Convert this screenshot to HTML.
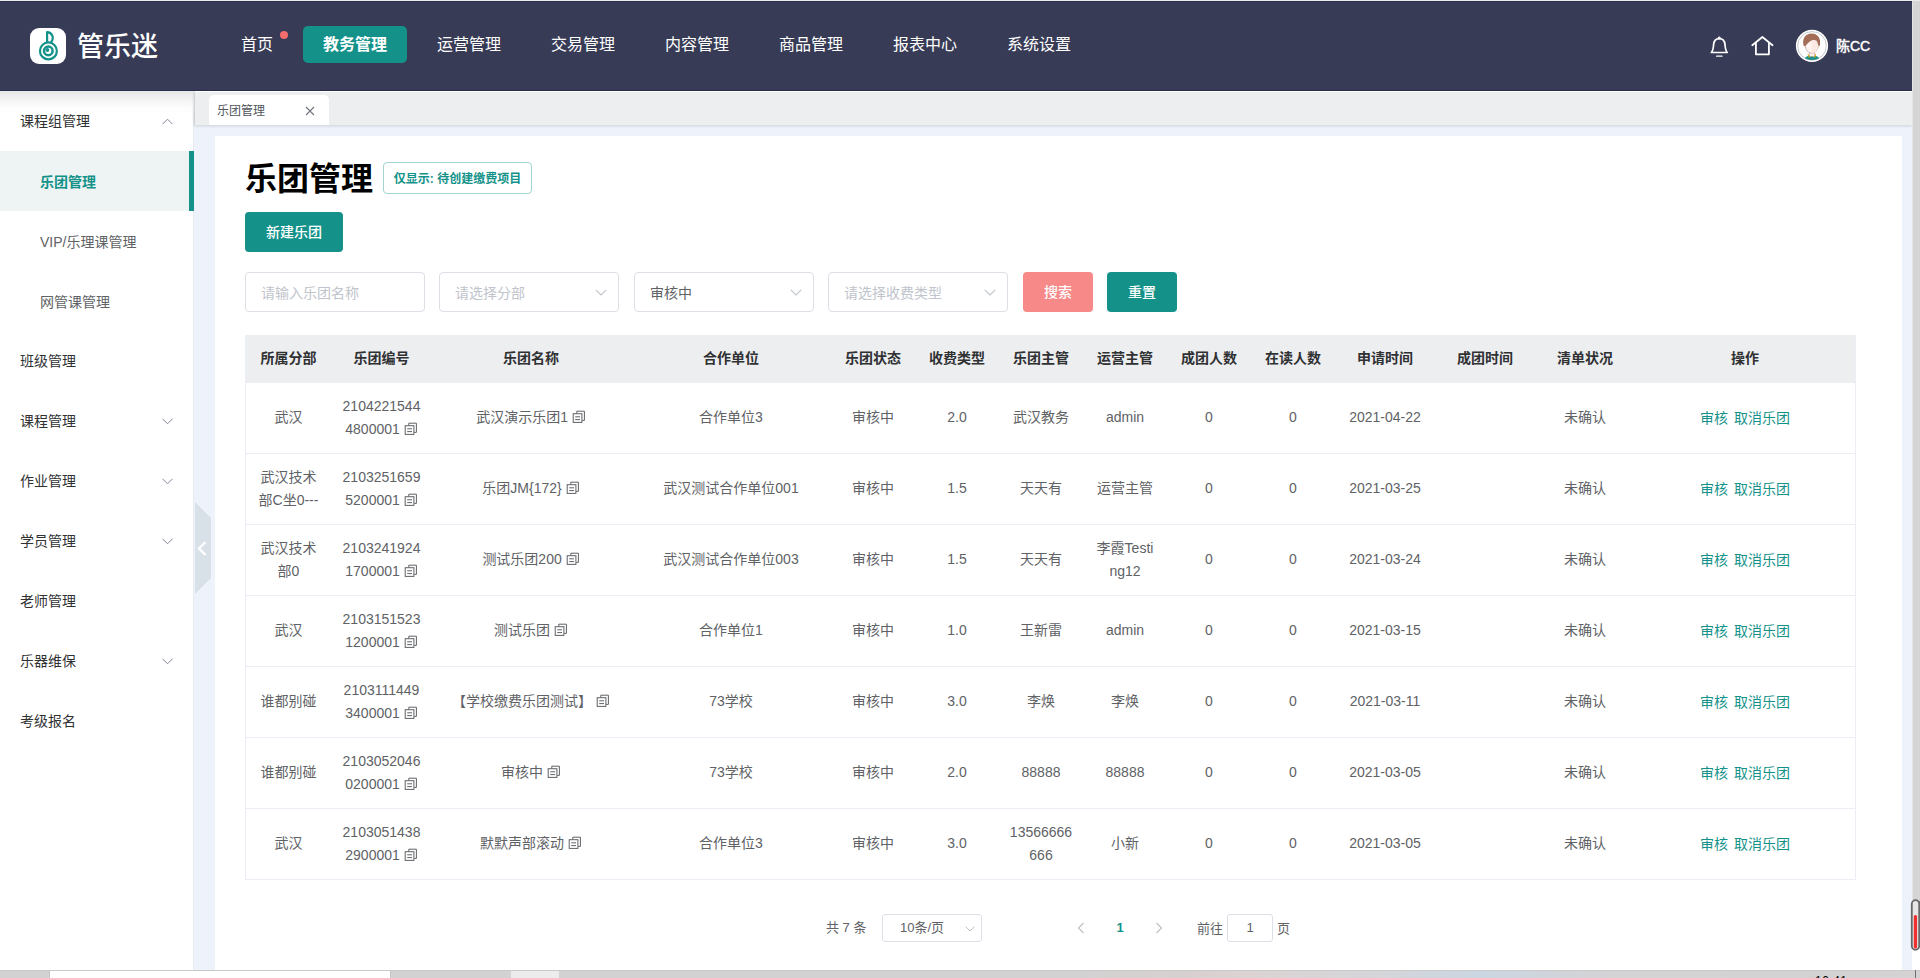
<!DOCTYPE html>
<html lang="zh-CN">
<head>
<meta charset="utf-8">
<title>乐团管理</title>
<style>
*{box-sizing:border-box;margin:0;padding:0}
html,body{width:1920px;height:978px;overflow:hidden}
body{position:relative;background:#eef2fa;font-family:"Liberation Sans","Noto Sans CJK SC",sans-serif;font-size:14px;color:#606266}
.abs{position:absolute}
#topline{left:0;top:0;width:1920px;height:1px;background:#ebebeb}
#header{left:0;top:1px;width:1912px;height:90px;background:#383b56;border-top:1px solid #2d3150;border-bottom:1px solid #2b3050}
#logo{left:30px;top:28px;width:36px;height:36px;border-radius:9px;background:#fff}
#logotext{left:77px;top:27px;font-size:27px;line-height:40px;color:#fff;font-weight:500;letter-spacing:0}
.nav{top:26px;height:37px;line-height:37px;font-size:16px;color:#fff;text-align:center;border-radius:5px;white-space:nowrap}
.nav.on{background:#14928a;font-weight:700}
#dot{left:280px;top:31px;width:8px;height:8px;border-radius:50%;background:#f56c6c}
#uname{left:1836px;top:35px;font-size:14px;line-height:22px;color:#fff;font-weight:400;-webkit-text-stroke:.45px #fff}
#sidebar{left:0;top:91px;width:194px;height:879px;background:#fff;border-right:1px solid #e8ebf2}
#sideshadow{left:0;top:91px;width:194px;height:26px;background:linear-gradient(#e7e7e7,rgba(243,243,243,.9) 35%,rgba(252,252,252,.5) 70%,rgba(255,255,255,0))}
.mi{left:0;width:194px;height:60px;line-height:60px;font-size:14px;color:#303133;padding-left:20px;white-space:nowrap}
.mi.sub{padding-left:40px;color:#606266;padding-top:1px}
.mi.act{background:#eef4f4;color:#14928a;font-weight:700;border-right:5px solid #14928a}
.arr{position:absolute;left:161.5px;top:26.5px;width:11px;height:7px}
#tabbar{left:194px;top:91px;width:1718px;height:34px;background:#edeef0;box-shadow:0 1px 3px rgba(0,0,0,.14);border-left:1px solid #d2d3d6;border-top:1px solid #fff}
#tab{left:209px;top:95px;width:120px;height:30px;background:#fff;border-radius:5px 5px 0 0;font-size:12px;line-height:30px;color:#50545c;padding-left:8px;padding-top:1px}
#card{left:215px;top:136px;width:1687px;height:834px;background:#fff}
#handle{left:194px;top:502px;width:18px;height:92px}
#vscroll{left:1912px;top:1px;width:8px;height:969px;background:#fff}
#vthumb{left:1912px;top:1px;width:8px;height:925px;background:#d5d5d5;border-left:1px solid #e4e4e2}
#taskbar{left:0;top:970px;width:1920px;height:8px;background:linear-gradient(90deg,#d2d2d2 0,#d2d2d2 55%,#d8d0d0 62%,#dcd3d3 65%,#d4d6da 72%,#cbd6e2 77%,#d3d3d5 84%,#d4d2d2 100%)}
h1{left:245px;top:157px;font-size:32px;line-height:44px;color:#000;font-weight:700;white-space:nowrap}
#tag{left:383px;top:162px;width:149px;height:32px;border:1px solid #a1d3d0;border-radius:4px;font-size:12px;line-height:32px;color:#14928a;font-weight:700;text-align:center;white-space:nowrap}
.btn{height:40px;line-height:40px;border-radius:4px;color:#fff;font-size:14px;font-weight:500;text-align:center;white-space:nowrap}
.inp{top:272px;width:180px;height:40px;border:1px solid #dcdfe6;border-radius:4px;background:#fff;line-height:40px;padding-left:15px;font-size:14px;color:#c0c4cc;white-space:nowrap}
.inp svg{position:absolute;right:11px;top:16px}
table{position:absolute;left:245px;top:335px;width:1610px;border-collapse:separate;border-spacing:0;table-layout:fixed}
.vline{top:335px;width:1px;height:545px;background:#ebeef5}
th{height:48px;background:#edeef0;color:#303133;font-weight:700;font-size:14px;text-align:center;padding:0 0 5px}
td{height:71px;border-bottom:1px solid #ebeef5;text-align:center;font-size:14px;line-height:23px;color:#606266;padding:0 10px .5px;word-break:break-all}
td.op{color:#14928a;white-space:nowrap}
td.op span{position:relative;top:1px}
.cp{display:inline-block;width:14px;height:14px;vertical-align:-2px;margin-left:0}
.pg{top:914px;height:28px;line-height:28px;font-size:13px;color:#606266;white-space:nowrap}
</style>
</head>
<body>
<div id="topline" class="abs"></div>
<header>
<div id="header" class="abs"></div>
<div id="logo" class="abs"><svg width="36" height="36" viewBox="0 0 36 36" fill="none" stroke="#14928a"><circle cx="18.4" cy="22.9" r="8.45" stroke-width="2.2"/><circle cx="18.3" cy="22.9" r="4.3" stroke-width="2.5"/><circle cx="17.4" cy="22" r="1.9" fill="#14928a" stroke="none"/><path d="M17.1 14.6V4.1C21.6 4.1 25 9.6 20.9 14.4" stroke-width="2.2" stroke-linejoin="round"/></svg></div>
<div id="logotext" class="abs">管乐迷</div>
<nav>
<div class="abs nav" style="left:221px;width:72px">首页</div>
<div id="dot" class="abs"></div>
<div class="abs nav on" style="left:303px;width:104px">教务管理</div>
<div class="abs nav" style="left:417px;width:104px">运营管理</div>
<div class="abs nav" style="left:531px;width:104px">交易管理</div>
<div class="abs nav" style="left:645px;width:104px">内容管理</div>
<div class="abs nav" style="left:759px;width:104px">商品管理</div>
<div class="abs nav" style="left:873px;width:104px">报表中心</div>
<div class="abs nav" style="left:987px;width:104px">系统设置</div>
</nav>
<svg class="abs" style="left:1708px;top:35px" width="24" height="24" viewBox="0 0 24 24" fill="none" stroke="#fff" stroke-width="1.7" stroke-linecap="round" stroke-linejoin="round"><path d="M3.3 17.5C5.2 15.5 5.3 13 5.6 9.6C5.9 6 8 3.6 11.3 3.6S16.7 6 17 9.6C17.3 13 17.4 15.5 19.3 17.5Z"/><circle cx="11.3" cy="2.9" r="0.9" stroke-width="1.2"/><path d="M8.6 21.2H14" stroke-width="1.3"/></svg>
<svg class="abs" style="left:1750px;top:34px" width="26" height="24" viewBox="0 0 26 24" fill="none" stroke="#fff" stroke-width="1.8" stroke-linecap="round" stroke-linejoin="round"><path d="M2.3 11.2L12.4 3L22.5 11.2"/><path d="M5.9 9.2V20.3H18.9V9.2"/></svg>
<svg class="abs" style="left:1795px;top:29px" width="34" height="34" viewBox="0 0 34 34"><defs><clipPath id="avc"><circle cx="17" cy="16.9" r="14.2"/></clipPath></defs><circle cx="17" cy="16.9" r="16.1" fill="#fff"/><g clip-path="url(#avc)"><path d="M8.6 34C8.6 28.4 12 26.6 17 26.6S25.4 28.4 25.4 34Z" fill="#14928a"/><rect x="14.6" y="22.5" width="5" height="5.2" fill="#fdeeea" stroke="#6a5555" stroke-width=".3"/><path d="M13 24.5L15.2 28.4L13.6 28.6L12.6 25.6Z M20.6 24.5L18.6 28.4L20.2 28.6L21 25.6Z" fill="#e0a514"/><ellipse cx="10.3" cy="17.8" rx="1" ry="1.6" fill="#fbe4de"/><ellipse cx="23.4" cy="17.8" rx="1" ry="1.6" fill="#fbe4de"/><ellipse cx="16.8" cy="17.3" rx="6.3" ry="6.9" fill="#fef3f1" stroke="#6a5555" stroke-width=".35"/><path d="M16.8 10.4A6.3 6.9 0 0 1 16.8 24.2Z" fill="#fde8e3"/><path d="M8.8 17.2C6.6 9.5 10.5 4.4 16.5 4.4C22.5 4.4 26.6 9 24.7 17.2L23.2 16.2C22.9 13.6 22 12 21 11.3C19.5 10.9 18 10.9 17 11.2C14.5 12.5 12 14.5 10.5 16.8Z" fill="#a46d57"/></g><circle cx="17" cy="16.9" r="14.3" fill="none" stroke="#8a8da0" stroke-width="0.5"/></svg>
<div id="uname" class="abs">陈CC</div>
</header>
<aside>
<div id="sidebar" class="abs"></div>
<div id="sideshadow" class="abs"></div>
<div class="abs mi" style="top:91px">课程组管理<svg class="arr" viewBox="0 0 11 7" fill="none" stroke="#818a9a" stroke-width="1"><path d="M0.5 6.2L5.5 1.2L10.5 6.2"/></svg></div>
<div class="abs mi sub act" style="top:151px">乐团管理</div>
<div class="abs mi sub" style="top:211px">VIP/乐理课管理</div>
<div class="abs mi sub" style="top:271px">网管课管理</div>
<div class="abs mi" style="top:331px">班级管理</div>
<div class="abs mi" style="top:391px">课程管理<svg class="arr" viewBox="0 0 11 7" fill="none" stroke="#818a9a" stroke-width="1"><path d="M0.5 0.8L5.5 5.8L10.5 0.8"/></svg></div>
<div class="abs mi" style="top:451px">作业管理<svg class="arr" viewBox="0 0 11 7" fill="none" stroke="#818a9a" stroke-width="1"><path d="M0.5 0.8L5.5 5.8L10.5 0.8"/></svg></div>
<div class="abs mi" style="top:511px">学员管理<svg class="arr" viewBox="0 0 11 7" fill="none" stroke="#818a9a" stroke-width="1"><path d="M0.5 0.8L5.5 5.8L10.5 0.8"/></svg></div>
<div class="abs mi" style="top:571px">老师管理</div>
<div class="abs mi" style="top:631px">乐器维保<svg class="arr" viewBox="0 0 11 7" fill="none" stroke="#818a9a" stroke-width="1"><path d="M0.5 0.8L5.5 5.8L10.5 0.8"/></svg></div>
<div class="abs mi" style="top:691px">考级报名</div>
<svg id="handle" class="abs" viewBox="0 0 18 92"><path d="M1 0L17 16V76L1 92Z" fill="#d8e0e8"/><path d="M11.6 40L5 46.5L11.6 53" fill="none" stroke="#fff" stroke-width="2.4"/></svg>
</aside>
<main>
<div id="tabbar" class="abs"></div>
<div id="tab" class="abs">乐团管理<svg class="abs" style="left:96px;top:11px" width="10" height="10" viewBox="0 0 10 10" stroke="#70757d" stroke-width="1.1"><path d="M1 1L9 9M9 1L1 9"/></svg></div>
<div id="card" class="abs"></div>
<h1 class="abs">乐团管理</h1>
<div id="tag" class="abs">仅显示: 待创建缴费项目</div>
<div class="abs btn" style="left:245px;top:212px;width:98px;background:#14928a">新建乐团</div>
<div class="abs inp" style="left:245px">请输入乐团名称</div>
<div class="abs inp" style="left:439px">请选择分部<svg width="12" height="7" viewBox="0 0 12 7" fill="none" stroke="#c0c4cc" stroke-width="1.1"><path d="M0.8 0.8L6 6L11.2 0.8"/></svg></div>
<div class="abs inp" style="left:634px;color:#606266">审核中<svg width="12" height="7" viewBox="0 0 12 7" fill="none" stroke="#c0c4cc" stroke-width="1.1"><path d="M0.8 0.8L6 6L11.2 0.8"/></svg></div>
<div class="abs inp" style="left:828px">请选择收费类型<svg width="12" height="7" viewBox="0 0 12 7" fill="none" stroke="#c0c4cc" stroke-width="1.1"><path d="M0.8 0.8L6 6L11.2 0.8"/></svg></div>
<div class="abs btn" style="left:1023px;top:272px;width:70px;background:#f78989">搜索</div>
<div class="abs btn" style="left:1107px;top:272px;width:70px;background:#14928a">重置</div>
<table><colgroup><col style="width:87px"><col style="width:99px"><col style="width:200px"><col style="width:200px"><col style="width:84px"><col style="width:84px"><col style="width:84px"><col style="width:84px"><col style="width:84px"><col style="width:84px"><col style="width:100px"><col style="width:100px"><col style="width:100px"><col style="width:220px"></colgroup>
<thead><tr><th>所属分部</th><th>乐团编号</th><th>乐团名称</th><th>合作单位</th><th>乐团状态</th><th>收费类型</th><th>乐团主管</th><th>运营主管</th><th>成团人数</th><th>在读人数</th><th>申请时间</th><th>成团时间</th><th>清单状况</th><th>操作</th></tr></thead>
<tbody>
<tr><td>武汉</td><td>2104221544<br>4800001 <svg class="cp" viewBox="0 0 14 14" fill="none" stroke="#606266" stroke-width="1"><rect x="1.2" y="3.7" width="8.7" height="8.7"/><path d="M4.8 3.4V1.2H12.4V10.4H10.2M3.2 6.8H8M3.2 9.6H8"/></svg></td><td>武汉演示乐团1 <svg class="cp" viewBox="0 0 14 14" fill="none" stroke="#606266" stroke-width="1"><rect x="1.2" y="3.7" width="8.7" height="8.7"/><path d="M4.8 3.4V1.2H12.4V10.4H10.2M3.2 6.8H8M3.2 9.6H8"/></svg></td><td>合作单位3</td><td>审核中</td><td>2.0</td><td>武汉教务</td><td>admin</td><td>0</td><td>0</td><td>2021-04-22</td><td></td><td>未确认</td><td class="op"><span>审核</span><span style="margin-left:6px">取消乐团</span></td></tr>
<tr><td>武汉技术<br>部C坐0---</td><td>2103251659<br>5200001 <svg class="cp" viewBox="0 0 14 14" fill="none" stroke="#606266" stroke-width="1"><rect x="1.2" y="3.7" width="8.7" height="8.7"/><path d="M4.8 3.4V1.2H12.4V10.4H10.2M3.2 6.8H8M3.2 9.6H8"/></svg></td><td>乐团JM{172} <svg class="cp" viewBox="0 0 14 14" fill="none" stroke="#606266" stroke-width="1"><rect x="1.2" y="3.7" width="8.7" height="8.7"/><path d="M4.8 3.4V1.2H12.4V10.4H10.2M3.2 6.8H8M3.2 9.6H8"/></svg></td><td>武汉测试合作单位001</td><td>审核中</td><td>1.5</td><td>天天有</td><td>运营主管</td><td>0</td><td>0</td><td>2021-03-25</td><td></td><td>未确认</td><td class="op"><span>审核</span><span style="margin-left:6px">取消乐团</span></td></tr>
<tr><td>武汉技术<br>部0</td><td>2103241924<br>1700001 <svg class="cp" viewBox="0 0 14 14" fill="none" stroke="#606266" stroke-width="1"><rect x="1.2" y="3.7" width="8.7" height="8.7"/><path d="M4.8 3.4V1.2H12.4V10.4H10.2M3.2 6.8H8M3.2 9.6H8"/></svg></td><td>测试乐团200 <svg class="cp" viewBox="0 0 14 14" fill="none" stroke="#606266" stroke-width="1"><rect x="1.2" y="3.7" width="8.7" height="8.7"/><path d="M4.8 3.4V1.2H12.4V10.4H10.2M3.2 6.8H8M3.2 9.6H8"/></svg></td><td>武汉测试合作单位003</td><td>审核中</td><td>1.5</td><td>天天有</td><td>李霞Testi<br>ng12</td><td>0</td><td>0</td><td>2021-03-24</td><td></td><td>未确认</td><td class="op"><span>审核</span><span style="margin-left:6px">取消乐团</span></td></tr>
<tr><td>武汉</td><td>2103151523<br>1200001 <svg class="cp" viewBox="0 0 14 14" fill="none" stroke="#606266" stroke-width="1"><rect x="1.2" y="3.7" width="8.7" height="8.7"/><path d="M4.8 3.4V1.2H12.4V10.4H10.2M3.2 6.8H8M3.2 9.6H8"/></svg></td><td>测试乐团 <svg class="cp" viewBox="0 0 14 14" fill="none" stroke="#606266" stroke-width="1"><rect x="1.2" y="3.7" width="8.7" height="8.7"/><path d="M4.8 3.4V1.2H12.4V10.4H10.2M3.2 6.8H8M3.2 9.6H8"/></svg></td><td>合作单位1</td><td>审核中</td><td>1.0</td><td>王新雷</td><td>admin</td><td>0</td><td>0</td><td>2021-03-15</td><td></td><td>未确认</td><td class="op"><span>审核</span><span style="margin-left:6px">取消乐团</span></td></tr>
<tr><td>谁都别碰</td><td>2103111449<br>3400001 <svg class="cp" viewBox="0 0 14 14" fill="none" stroke="#606266" stroke-width="1"><rect x="1.2" y="3.7" width="8.7" height="8.7"/><path d="M4.8 3.4V1.2H12.4V10.4H10.2M3.2 6.8H8M3.2 9.6H8"/></svg></td><td>【学校缴费乐团测试】 <svg class="cp" viewBox="0 0 14 14" fill="none" stroke="#606266" stroke-width="1"><rect x="1.2" y="3.7" width="8.7" height="8.7"/><path d="M4.8 3.4V1.2H12.4V10.4H10.2M3.2 6.8H8M3.2 9.6H8"/></svg></td><td>73学校</td><td>审核中</td><td>3.0</td><td>李焕</td><td>李焕</td><td>0</td><td>0</td><td>2021-03-11</td><td></td><td>未确认</td><td class="op"><span>审核</span><span style="margin-left:6px">取消乐团</span></td></tr>
<tr><td>谁都别碰</td><td>2103052046<br>0200001 <svg class="cp" viewBox="0 0 14 14" fill="none" stroke="#606266" stroke-width="1"><rect x="1.2" y="3.7" width="8.7" height="8.7"/><path d="M4.8 3.4V1.2H12.4V10.4H10.2M3.2 6.8H8M3.2 9.6H8"/></svg></td><td>审核中 <svg class="cp" viewBox="0 0 14 14" fill="none" stroke="#606266" stroke-width="1"><rect x="1.2" y="3.7" width="8.7" height="8.7"/><path d="M4.8 3.4V1.2H12.4V10.4H10.2M3.2 6.8H8M3.2 9.6H8"/></svg></td><td>73学校</td><td>审核中</td><td>2.0</td><td>88888</td><td>88888</td><td>0</td><td>0</td><td>2021-03-05</td><td></td><td>未确认</td><td class="op"><span>审核</span><span style="margin-left:6px">取消乐团</span></td></tr>
<tr><td>武汉</td><td>2103051438<br>2900001 <svg class="cp" viewBox="0 0 14 14" fill="none" stroke="#606266" stroke-width="1"><rect x="1.2" y="3.7" width="8.7" height="8.7"/><path d="M4.8 3.4V1.2H12.4V10.4H10.2M3.2 6.8H8M3.2 9.6H8"/></svg></td><td>默默声部滚动 <svg class="cp" viewBox="0 0 14 14" fill="none" stroke="#606266" stroke-width="1"><rect x="1.2" y="3.7" width="8.7" height="8.7"/><path d="M4.8 3.4V1.2H12.4V10.4H10.2M3.2 6.8H8M3.2 9.6H8"/></svg></td><td>合作单位3</td><td>审核中</td><td>3.0</td><td>13566666<br>666</td><td>小新</td><td>0</td><td>0</td><td>2021-03-05</td><td></td><td>未确认</td><td class="op"><span>审核</span><span style="margin-left:6px">取消乐团</span></td></tr>
</tbody></table>
<div class="abs vline" style="left:245px"></div><div class="abs vline" style="left:1855px"></div>
<div class="abs pg" style="left:826px">共 7 条</div>
<div class="abs pg" style="left:882px;width:100px;border:1px solid #dcdfe6;border-radius:3px;line-height:26px;padding-left:17px">10条/页<svg class="abs" style="right:6.5px;top:11px" width="10" height="6" viewBox="0 0 10 6" fill="none" stroke="#c0c4cc" stroke-width="1"><path d="M0.7 0.7L5 5L9.3 0.7"/></svg></div>
<svg class="abs" style="left:1077px;top:922px" width="8" height="12" viewBox="0 0 8 12" fill="none" stroke="#c0c4cc" stroke-width="1.3"><path d="M6.5 1L1.5 6L6.5 11"/></svg>
<div class="abs pg" style="left:1105px;width:30px;text-align:center;color:#14928a;font-weight:700">1</div>
<svg class="abs" style="left:1155px;top:922px" width="8" height="12" viewBox="0 0 8 12" fill="none" stroke="#c0c4cc" stroke-width="1.3"><path d="M1.5 1L6.5 6L1.5 11"/></svg>
<div class="abs pg" style="left:1197px;top:915px">前往</div>
<div class="abs pg" style="left:1227px;width:46px;border:1px solid #dcdfe6;border-radius:3px;line-height:26px;text-align:center">1</div>
<div class="abs pg" style="left:1277px;top:915px">页</div>
</main>
<div id="vscroll" class="abs"></div>
<div id="vthumb" class="abs"></div>
<footer>
<div id="taskbar" class="abs"></div>
<div class="abs" style="left:0;top:970px;width:1920px;height:1px;background:#c9c9c9"></div>
<div class="abs" style="left:49px;top:971px;width:342px;height:7px;background:#fff;border-left:1px solid #c6c6c6;border-right:1px solid #c6c6c6"></div>
<div class="abs" style="left:511px;top:971px;width:48px;height:7px;background:#ececec"></div>
<div class="abs" style="left:1815px;top:975px;font-size:12px;line-height:12px;color:#000;letter-spacing:.5px">10:41</div>
<div class="abs" style="left:1915px;top:970px;width:1px;height:8px;background:#6e6e6e"></div>
<svg class="abs" style="left:1910px;top:899px" width="10" height="53" viewBox="0 0 10 53"><rect x="9" y="2" width="1" height="25" fill="#777"/><rect x="1.8" y="1.2" width="7.4" height="49.6" rx="3.7" fill="#e6e6e6" stroke="#686868" stroke-width="1.8"/><rect x="3.8" y="16" width="3.3" height="33.6" rx="1.6" fill="#f03030"/></svg>
</footer>
</body>
</html>
